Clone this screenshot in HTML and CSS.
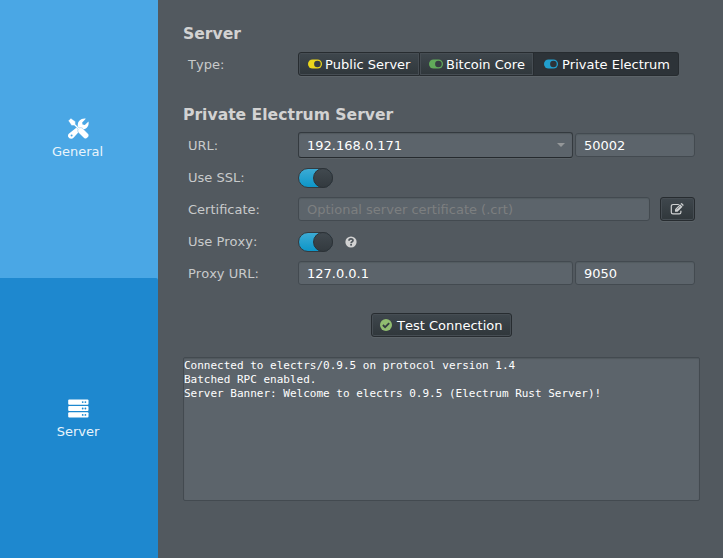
FILE: index.html
```html
<!DOCTYPE html>
<html lang="en">
<head>
<meta charset="utf-8">
<title>Preferences</title>
<link rel="stylesheet" href="styles.css">
</head>
<body>
<div class="window">
  <nav class="sidebar">
    <a class="tab">
      <svg class="tab-icon tools" viewBox="0 0 21 21">
        <path d="M3.200 20.800a3 3 0 0 1-2.400-5L9.800 8.400C9.200 3.900 12.500 0 17.800.7l-3.600 3.700.3 2.200 2.300.4 3.700-3.600c1 5.400-3.200 8.700-7.300 7.800L5.500 19.800a3.100 3.100 0 0 1-2.300 1z" fill="#fff"/>
        <circle cx="3.600" cy="17.500" r="1" class="hole"/>
        <path d="M.3 2.800 2.900.3l4.500 3.200v2.700l3.800 3.800c1.300-.6 2.800-.3 3.700.6l5.200 5.200c.9.9.9 2.200.1 3.100l-1.200 1.200c-.9.8-2.200.8-3.100 0l-5.200-5.200c-1-1-1.200-2.400-.6-3.600L6.300 7.500H3.600z" fill="#fff" class="driver"/>
      </svg>
      <span>General</span>
    </a>
    <a class="tab active">
      <svg class="tab-icon" viewBox="0 0 21 21">
        <g fill="#fff"><rect x=".2" y="1.500" width="20.300" height="5.200" rx="1"/><rect x=".2" y="7.900" width="20.300" height="5.200" rx="1"/><rect x=".2" y="14.300" width="20.300" height="5.200" rx="1"/></g>
        <g fill="#1e88cf"><circle cx="14.700" cy="4.100" r=".9"/><circle cx="17.400" cy="4.100" r=".9"/><circle cx="14.700" cy="10.500" r=".9"/><circle cx="17.400" cy="10.500" r=".9"/><circle cx="14.700" cy="16.900" r=".9"/><circle cx="17.400" cy="16.900" r=".9"/></g>
      </svg>
      <span>Server</span>
    </a>
  </nav>
  <main class="panel">
    <h2>Server</h2>
    <div class="row type-row">
      <label>Type:</label>
      <div class="segments">
        <button class="seg public"><svg class="dot" viewBox="0 0 14 10"><rect y=".5" width="14" height="9" rx="4.500" fill="currentColor"/><circle cx="9.400" cy="5" r="3.300" fill="#363e43"/></svg>Public Server</button>
        <button class="seg core"><svg class="dot" viewBox="0 0 14 10"><rect y=".5" width="14" height="9" rx="4.500" fill="currentColor"/><circle cx="9.400" cy="5" r="3.300" fill="#363e43"/></svg>Bitcoin Core</button>
        <button class="seg private"><svg class="dot" viewBox="0 0 14 10"><rect y=".5" width="14" height="9" rx="4.500" fill="currentColor"/><circle cx="9.400" cy="5" r="3.300" fill="#2d3338"/></svg>Private Electrum</button>
      </div>
    </div>
    <h2 class="second">Private Electrum Server</h2>
    <div class="row">
      <label>URL:</label>
      <div class="combo"><span>192.168.0.171</span><svg class="arrow" viewBox="0 0 8 4"><path d="M0 0h8L4 4z" fill="#949799"/></svg></div>
      <div class="field port">50002</div>
    </div>
    <div class="row">
      <label>Use SSL:</label>
      <div class="toggle"><i></i></div>
    </div>
    <div class="row">
      <label>Certificate:</label>
      <div class="field cert">Optional server certificate (.crt)</div>
      <button class="edit"><svg viewBox="0 0 14 12"><path d="M8.800 1.500H3A1.700 1.700 0 0 0 1.300 3.200v6A1.700 1.700 0 0 0 3 10.900h6.200a1.700 1.700 0 0 0 1.700-1.700V7.700" fill="none" stroke="#cfd1d2" stroke-width="1.200"/><path d="m5 6.200 5-5 2.500 2.500-5 5H5z" fill="#cfd1d2"/><path d="m10.600.8.6-.6q.4-.3.8 0l1.500 1.500q.4.400 0 .8l-.6.6z" fill="#cfd1d2"/><path d="m6.800 6.400 3.400-3.400" stroke="#363d43" stroke-width=".6"/></svg></button>
    </div>
    <div class="row">
      <label>Use Proxy:</label>
      <div class="toggle"><i></i></div>
      <svg class="help" viewBox="0 0 12 12"><circle cx="6" cy="6" r="5.600" fill="#d2d2d2"/><path d="M4 4.700C4 2.200 8 2.300 8 4.500 8 5.900 6.100 5.700 6.100 7.200" fill="none" stroke="#50575d" stroke-width="1.700"/><rect x="5.200" y="8" width="1.800" height="1.600" fill="#50575d"/></svg>
    </div>
    <div class="row">
      <label>Proxy URL:</label>
      <div class="field host">127.0.0.1</div>
      <div class="field port">9050</div>
    </div>
    <button class="test"><svg viewBox="0 0 12 12"><circle cx="6" cy="6" r="6" fill="#91bd70"/><path d="m2.900 6 2.200 2.200 4.100-4.100" fill="none" stroke="#343c41" stroke-width="1.800"/></svg>Test Connection</button>
    <div class="log">Connected to electrs/0.9.5 on protocol version 1.4
Batched RPC enabled.
Server Banner: Welcome to electrs 0.9.5 (Electrum Rust Server)!</div>
  </main>
</div>
</body>
</html>
```

FILE: styles.css
```css
* { box-sizing: border-box; }
body { margin: 0; font: 13px/16px "DejaVu Sans", sans-serif; font-kerning: none; color: #fff; }
.window { display: flex; width: 723px; height: 558px; background: #52595f; overflow: hidden; }
.sidebar { display: flex; flex-direction: column; width: 158px; background: #4aa7e5; }
.tab { display: flex; flex-direction: column; align-items: center; width: 158px; height: 278px; padding: 118px 3px 0 0; color: #e9f4fb; }
.tab.active { height: 280px; padding-top: 120px; padding-right: 2px; background: #1e88cf; border-radius: 0 2px 0 0; }
.tab-icon { width: 21px; height: 21px; margin-bottom: 5px; }
.tools { margin-left: 1px; }
.hole { fill: #4aa7e5; }
.driver { stroke: #4aa7e5; stroke-width: .4; }
.panel { display: flex; flex-direction: column; width: 565px; padding: 25px 23px 0 25px; }
h2 { margin: 0; font-size: 15.6px; line-height: 18px; font-weight: bold; color: #d2d2d2; }
.row { display: flex; align-items: center; height: 32px; }
.type-row { height: 42px; }
.second { margin-top: 21px; margin-bottom: 5px; }
label { width: 115px; padding: 2px 0 0 5px; flex: none; color: #c8cacb; }
button { font: inherit; font-kerning: none; color: #fff; padding: 0; border: 1px solid #272c30; background: linear-gradient(#3f474d, #30373b); box-shadow: inset 0 0 0 1px #464d53, 0 1px 0 #5c6368; border-radius: 3px; }
.segments { display: flex; width: 381px; height: 24px; }
.seg { display: flex; align-items: center; gap: 3px; height: 24px; padding: 2px 0 0 9px; border-radius: 0; white-space: nowrap; }
.dot { width: 14px; height: 10px; margin-top: -2px; flex: none; }
.public { width: 122px; border-radius: 3px 0 0 3px; }
.public .dot { color: #ebd71c; }
.core { width: 114px; border-left: 0; }
.core .dot { color: #61aa5a; }
.private { width: 145px; padding-left: 10px; gap: 4px; border-left: 0; border-radius: 0 3px 3px 0; background: #2d3338; box-shadow: 0 1px 0 #5c6368; }
.private .dot { color: #219fce; }
.field, .combo { display: flex; align-items: center; height: 24px; padding: 2px 0 0 8px; border: 1px solid #434a50; border-radius: 3px; background: #5c646b; box-shadow: inset 0 1px 1px #535b61; white-space: pre; }
.combo { width: 275px; height: 26px; justify-content: space-between; padding-right: 7px; border-color: #343a3f; border-bottom-color: #252a2e; box-shadow: inset 0 1px 1px #50585e, 0 1px 0 #5b6267; }
.arrow { width: 8px; height: 4px; margin-top: -2px; }
.port { width: 120px; margin-left: 2px; }
.host { width: 275px; }
.cert { width: 352px; color: #7c7f80; }
.edit { display: grid; place-items: center; width: 35px; height: 24px; margin-left: 10px; }
.edit svg { width: 14px; height: 12px; margin-right: 1px; }
.toggle { display: flex; justify-content: flex-end; width: 35px; height: 20px; margin-top: 2px; border: 1px solid #343b40; border-radius: 10px; background: linear-gradient(#3cabd5, #0d96c8); }
.toggle i { width: 20px; height: 20px; margin: -1px; border: 1px solid #2c3237; border-radius: 50%; background: linear-gradient(#41494f, #333a3f); }
.help { width: 12px; height: 12px; margin: 2px 0 0 11.5px; }
.test { display: flex; align-items: center; width: 141px; height: 24px; margin: 24px 0 20px 188px; padding: 2px 0 0 8px; gap: 5px; white-space: nowrap; }
.test svg { width: 12px; height: 12px; margin-top: -2px; }
.log { width: 517px; height: 144px; flex: none; padding: 1px 0 0; border: 1px solid #434a50; border-radius: 2px; background: #5c646b; box-shadow: inset 0 1px 1px #50585e; font: 11px/14px "DejaVu Sans Mono", monospace; white-space: pre; }
```
